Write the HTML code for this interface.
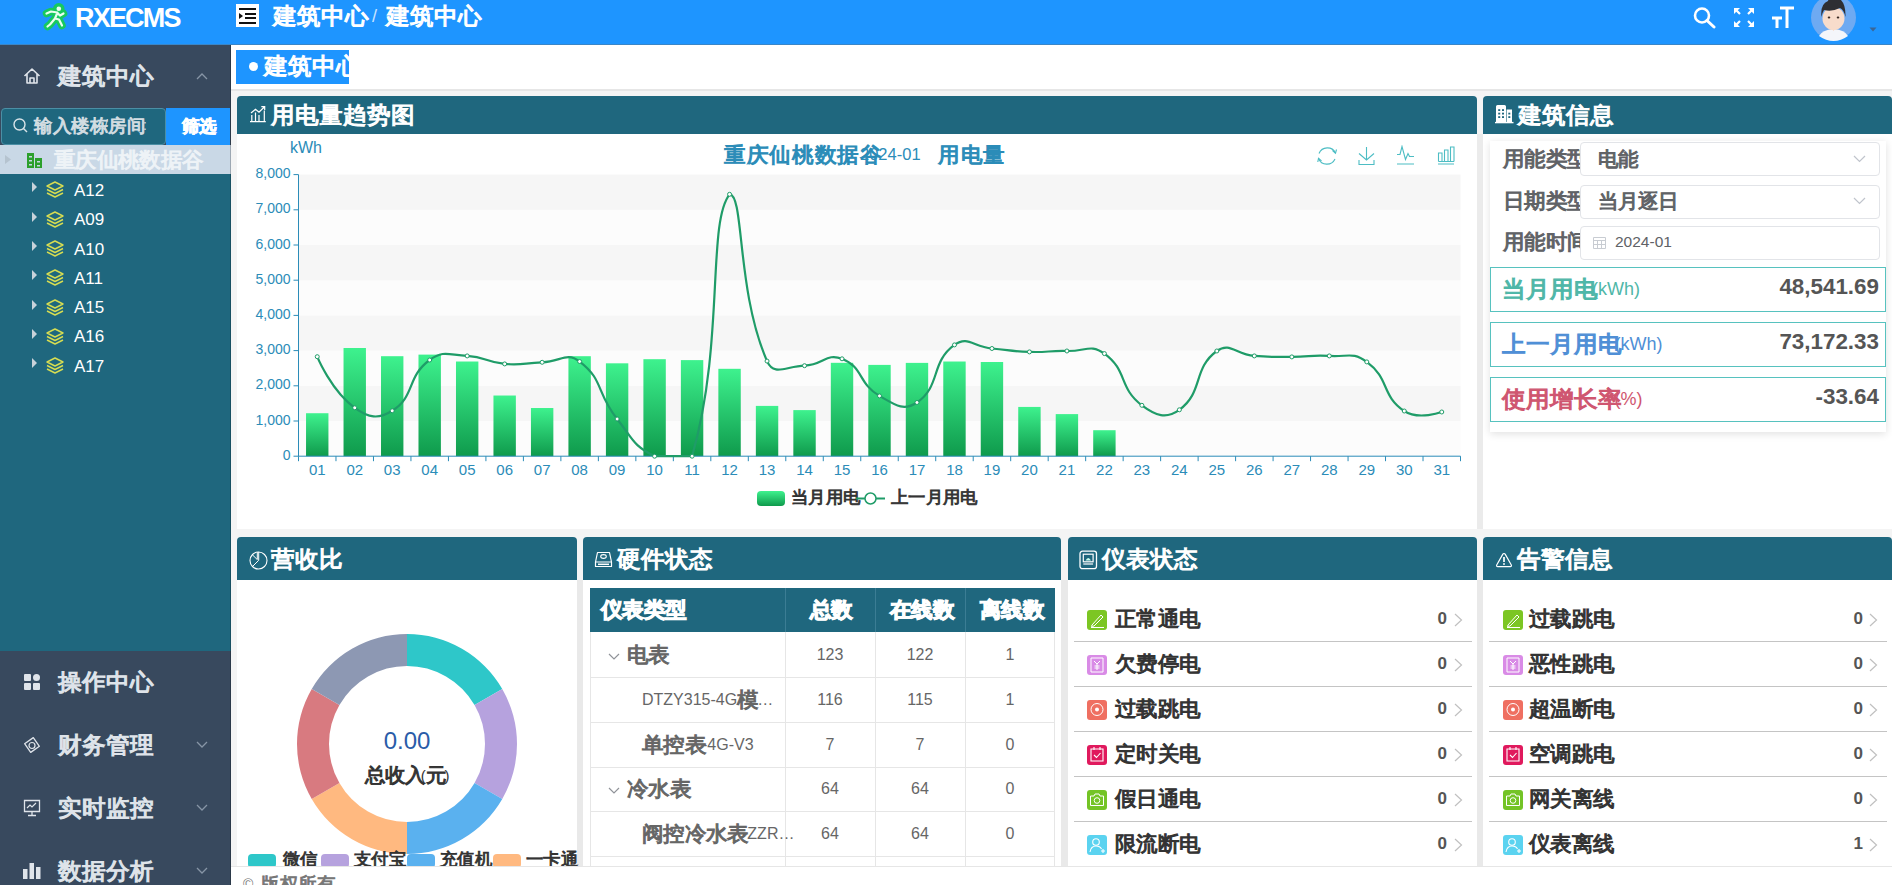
<!DOCTYPE html>
<html><head><meta charset="utf-8"><title>RXECMS</title><style>
*{margin:0;padding:0;box-sizing:border-box}
html,body{width:1892px;height:885px;overflow:hidden}
body{position:relative;background:#f4f4f4;font-family:"Liberation Sans",sans-serif;color:#333}
.a{position:absolute}
.z{display:inline-block;transform:scale(1.333,1.3);transform-origin:0 50%;-webkit-text-stroke:.05em}
.t{position:absolute;white-space:nowrap}
#hdr{left:0;top:0;width:1892px;height:45px;background:#1e95ff;border-bottom:1px solid #3a86c8}
#side{left:0;top:45px;width:231px;height:840px;background:#38495e}
#tree{left:0;top:174px;width:231px;height:477px;background:#1f677e}
.mi{color:#dfe4ea;font-size:18px;height:30px;line-height:30px}
.tr{color:#fff;font-size:17px;height:24px;line-height:24px}
.ph{background:#1f677e;border-radius:4px 4px 0 0;color:#fff;font-size:18px}
.ph .t{line-height:26px;height:26px}
.pb{background:#fff}
.sel{position:absolute;left:1580px;width:300px;height:34px;border:1px solid #e2e4e8;border-radius:4px;background:#fff}
.lab{font-size:15px;color:#606266;height:20px;line-height:20px}
.box{position:absolute;left:1490px;width:396px;height:45px;border:1px solid #57c2bf;background:#fff}
.box .l{position:absolute;left:11px;top:9.5px;font-size:18px;line-height:22px;height:22px;white-space:nowrap}
.box .v{position:absolute;right:6px;top:5.5px;font-size:22.4px;line-height:26px;font-weight:bold;color:#555}
.tbl{border-collapse:collapse}
.row{position:absolute;height:45px;border-bottom:1px solid #c8c8c8}
.row .ic{position:absolute;top:13px;width:20px;height:19px;border-radius:3px}
.row .n{position:absolute;top:12px;font-size:16px;line-height:20px;color:#333;white-space:nowrap}
.row .c{position:absolute;top:12px;font-size:17px;line-height:20px;font-weight:bold;color:#555}
.row .ch{position:absolute;top:15px;width:8px;height:14px}
.tc{position:absolute;font-size:16px;color:#666;line-height:20px;white-space:nowrap}
.lg{position:absolute;font-size:13px;color:#333;line-height:16px;white-space:nowrap}

</style></head><body>
<!-- HEADER -->
<div id="hdr" class="a">
  <svg class="a" style="left:38px;top:0" width="34" height="34" viewBox="0 0 34 34">
    <g fill="none" stroke-linecap="round" stroke-linejoin="round">
      <g stroke="#17c95e" stroke-width="7.5"><path d="M8.5 13.5 L13 11.5 L19.5 12.5 L17 18.5 L12 24.5 L9.5 26.5 M19.5 13 L22 15.5 L25.5 13.5 M17 18.5 L21 19.5 L24 25.5"/><circle cx="20.8" cy="8.8" r="2"/></g>
      <g stroke="#e9fff0" stroke-width="2.2"><path d="M8.5 13.5 L13 11.5 L19.5 12.5 L17 18.5 L12 24.5 L9.5 26.5 M19.5 13 L22 15.5 L25.5 13.5 M17 18.5 L21 19.5 L24 25.5"/></g>
      <circle cx="20.8" cy="8.8" r="2.3" fill="#e9fff0"/>
    </g>
  </svg>
  <div class="t" style="left:75px;top:5px;font-size:27px;line-height:26px;font-weight:bold;color:#fff;letter-spacing:-1.8px">RXECMS</div>
  <svg class="a" style="left:236px;top:4px" width="23" height="23" viewBox="0 0 23 23">
    <rect width="23" height="23" fill="#fff"/>
    <path d="M3 5H20M9 10H20M9 14H20M3 19H20" stroke="#111" stroke-width="2"/>
    <path d="M3 9 L7 12 L3 15Z" fill="#111"/>
  </svg>
  <div class="t" style="left:273px;top:5px;font-size:18px;line-height:22px;color:#fff"><span class="z" style="margin-right:1em">建筑中心</span> <span style="opacity:.75;margin:0 4px">/</span> <span class="z" style="margin-right:1em">建筑中心</span></div>
  <svg class="a" style="left:1692px;top:6px" width="25" height="23" viewBox="0 0 25 23">
    <circle cx="10" cy="9.5" r="7" fill="none" stroke="#fff" stroke-width="2.6"/>
    <path d="M15 14.5 L22 21" stroke="#fff" stroke-width="3" stroke-linecap="round"/>
  </svg>
  <svg class="a" style="left:1732px;top:6px" width="24" height="23" viewBox="0 0 24 23">
    <g stroke="#fff" stroke-width="2.2" fill="none">
      <path d="M3 3 L8 8M21 3 L16 8M3 20 L8 15M21 20 L16 15"/>
    </g>
    <g fill="#fff">
      <path d="M2 2 H8 L2 8Z"/><path d="M22 2 H16 L22 8Z"/><path d="M2 21 H8 L2 15Z"/><path d="M22 21 H16 L22 15Z"/>
    </g>
  </svg>
  <svg class="a" style="left:1771px;top:5px" width="24" height="24" viewBox="0 0 24 24">
    <path d="M9 3 H23 M16 3 V23" stroke="#fff" stroke-width="3"/>
    <path d="M1 13 H11 M6 13 V23" stroke="#fff" stroke-width="3"/>
  </svg>
  <svg class="a" style="left:1810px;top:-5px" width="47" height="47" viewBox="0 0 47 47">
    <circle cx="23.5" cy="22.5" r="22.5" fill="#6eaaf2"/>
    <path d="M9 41 Q12 35 23.5 34 Q35 35 38 41 Q31 46 23.5 46 Q16 46 9 41Z" fill="#f4f6fa"/>
    <path d="M19 30 L23.5 36 L28 30Z" fill="#f6d5c4"/>
    <ellipse cx="23.5" cy="23.5" rx="11" ry="11.5" fill="#f8dccb"/>
    <path d="M11.5 22 Q10 9 18 6 Q20 -1 26 2 Q36 5 35.5 22 Q34 15 30 13 Q22 17 14 15 Q12 18 11.5 22Z" fill="#2e2e33"/>
    <ellipse cx="19" cy="22.5" rx="1.3" ry="1.1" fill="#3a2a22"/><ellipse cx="28" cy="22.5" rx="1.3" ry="1.1" fill="#3a2a22"/>
  </svg>
  <svg class="a" style="left:1869px;top:27px" width="8" height="5" viewBox="0 0 8 5"><path d="M0.5 0.5 H7.5 L4 4.5Z" fill="#3a6696"/></svg>
</div>

<!-- SIDEBAR -->
<div id="side" class="a"></div>
<svg class="a" style="left:23px;top:67px" width="18" height="18" viewBox="0 0 18 18">
  <path d="M1.5 9 L9 2 L16.5 9 M4 7 V16 H14 V7 M7 16 V11 H11 V16" fill="none" stroke="#dfe4ea" stroke-width="1.6" stroke-linejoin="round"/>
</svg>
<div class="t mi" style="left:58px;top:61px"><span class="z" style="margin-right:1em">建筑中心</span></div>
<svg class="a" style="left:196px;top:72px" width="12" height="8" viewBox="0 0 12 8"><path d="M1 7 L6 2 L11 7" fill="none" stroke="#8795a6" stroke-width="1.3"/></svg>

<!-- search -->
<div class="a" style="left:1px;top:108px;width:165px;height:37px;background:#1f677e;border:1px solid #4b8fa5;border-radius:4px"></div>
<svg class="a" style="left:12px;top:117px" width="17" height="17" viewBox="0 0 17 17"><circle cx="7.5" cy="7.5" r="5.5" fill="none" stroke="#d8e3e8" stroke-width="1.4"/><path d="M11.5 11.5 L15 15" stroke="#d8e3e8" stroke-width="1.4"/></svg>
<div class="t" style="left:34px;top:116px;font-size:14px;line-height:18px;color:#d3dde2"><span class="z" style="margin-right:1em">输入楼栋</span>/<span class="z" style="margin-right:0.5em">房间</span>:</div>
<div class="a" style="left:166px;top:108px;width:64px;height:37px;background:#1e95ff"></div>
<div class="t" style="left:166px;top:117.5px;width:64px;text-align:center;font-size:13px;line-height:18px;color:#fff;font-weight:bold"><span class="z" style="margin-right:0.5em">筛选</span></div>

<!-- tree -->
<div class="a" style="left:0;top:145px;width:231px;height:29px;background:#c9d8e6"></div>
<svg class="a" style="left:5px;top:155px" width="6" height="9" viewBox="0 0 6 9"><path d="M0 0 L6 4.5 L0 9Z" fill="#b5c3cf"/></svg>
<svg class="a" style="left:26px;top:152px" width="17" height="16" viewBox="0 0 17 16">
  <rect x="1" y="1" width="7" height="15" fill="#2ca02c"/><rect x="9" y="6" width="7" height="10" fill="#2ca02c"/>
  <g fill="#c9d8e6"><rect x="3" y="4" width="3" height="1.5"/><rect x="3" y="8" width="3" height="1.5"/><rect x="3" y="12" width="3" height="1.5"/><rect x="11" y="9" width="3" height="1.5"/><rect x="11" y="13" width="3" height="1.5"/></g>
</svg>
<div class="t" style="left:54px;top:150px;font-size:16px;line-height:20px;color:#eef3f7"><span class="z" style="margin-right:1.75em">重庆仙桃数据谷</span></div>
<div id="tree" class="a"></div>
<div class="a" style="left:230px;top:45px;width:1px;height:840px;background:rgba(0,0,0,.22)"></div>
<div class="a" id="treeitems"></div>
<svg class="a" style="left:32px;top:182.0px" width="6" height="10" viewBox="0 0 6 10"><path d="M0 0 L5 5 L0 10Z" fill="#c8d2da"/></svg>
<svg class="a" style="left:46px;top:181.0px" width="18" height="17" viewBox="0 0 18 17"><g fill="none" stroke="#d6dc52" stroke-width="1.4" stroke-linejoin="round"><path d="M9 1 L17 5 L9 9 L1 5Z"/><path d="M1 8.5 L9 12.5 L17 8.5"/><path d="M1 12 L9 16 L17 12"/></g></svg>
<div class="t tr" style="left:74px;top:178.5px">A12</div>
<svg class="a" style="left:32px;top:211.5px" width="6" height="10" viewBox="0 0 6 10"><path d="M0 0 L5 5 L0 10Z" fill="#c8d2da"/></svg>
<svg class="a" style="left:46px;top:210.5px" width="18" height="17" viewBox="0 0 18 17"><g fill="none" stroke="#d6dc52" stroke-width="1.4" stroke-linejoin="round"><path d="M9 1 L17 5 L9 9 L1 5Z"/><path d="M1 8.5 L9 12.5 L17 8.5"/><path d="M1 12 L9 16 L17 12"/></g></svg>
<div class="t tr" style="left:74px;top:208.0px">A09</div>
<svg class="a" style="left:32px;top:241.0px" width="6" height="10" viewBox="0 0 6 10"><path d="M0 0 L5 5 L0 10Z" fill="#c8d2da"/></svg>
<svg class="a" style="left:46px;top:240.0px" width="18" height="17" viewBox="0 0 18 17"><g fill="none" stroke="#d6dc52" stroke-width="1.4" stroke-linejoin="round"><path d="M9 1 L17 5 L9 9 L1 5Z"/><path d="M1 8.5 L9 12.5 L17 8.5"/><path d="M1 12 L9 16 L17 12"/></g></svg>
<div class="t tr" style="left:74px;top:237.5px">A10</div>
<svg class="a" style="left:32px;top:270.0px" width="6" height="10" viewBox="0 0 6 10"><path d="M0 0 L5 5 L0 10Z" fill="#c8d2da"/></svg>
<svg class="a" style="left:46px;top:269.0px" width="18" height="17" viewBox="0 0 18 17"><g fill="none" stroke="#d6dc52" stroke-width="1.4" stroke-linejoin="round"><path d="M9 1 L17 5 L9 9 L1 5Z"/><path d="M1 8.5 L9 12.5 L17 8.5"/><path d="M1 12 L9 16 L17 12"/></g></svg>
<div class="t tr" style="left:74px;top:266.5px">A11</div>
<svg class="a" style="left:32px;top:299.5px" width="6" height="10" viewBox="0 0 6 10"><path d="M0 0 L5 5 L0 10Z" fill="#c8d2da"/></svg>
<svg class="a" style="left:46px;top:298.5px" width="18" height="17" viewBox="0 0 18 17"><g fill="none" stroke="#d6dc52" stroke-width="1.4" stroke-linejoin="round"><path d="M9 1 L17 5 L9 9 L1 5Z"/><path d="M1 8.5 L9 12.5 L17 8.5"/><path d="M1 12 L9 16 L17 12"/></g></svg>
<div class="t tr" style="left:74px;top:296.0px">A15</div>
<svg class="a" style="left:32px;top:328.5px" width="6" height="10" viewBox="0 0 6 10"><path d="M0 0 L5 5 L0 10Z" fill="#c8d2da"/></svg>
<svg class="a" style="left:46px;top:327.5px" width="18" height="17" viewBox="0 0 18 17"><g fill="none" stroke="#d6dc52" stroke-width="1.4" stroke-linejoin="round"><path d="M9 1 L17 5 L9 9 L1 5Z"/><path d="M1 8.5 L9 12.5 L17 8.5"/><path d="M1 12 L9 16 L17 12"/></g></svg>
<div class="t tr" style="left:74px;top:325.0px">A16</div>
<svg class="a" style="left:32px;top:358.0px" width="6" height="10" viewBox="0 0 6 10"><path d="M0 0 L5 5 L0 10Z" fill="#c8d2da"/></svg>
<svg class="a" style="left:46px;top:357.0px" width="18" height="17" viewBox="0 0 18 17"><g fill="none" stroke="#d6dc52" stroke-width="1.4" stroke-linejoin="round"><path d="M9 1 L17 5 L9 9 L1 5Z"/><path d="M1 8.5 L9 12.5 L17 8.5"/><path d="M1 12 L9 16 L17 12"/></g></svg>
<div class="t tr" style="left:74px;top:354.5px">A17</div>

<!-- bottom menu icons -->
<svg class="a" style="left:24px;top:674px" width="16" height="16" viewBox="0 0 16 16"><g fill="#dfe4ea"><rect x="0" y="0" width="7" height="7" rx="1"/><rect x="9" y="0" width="7" height="7" rx="3.5"/><rect x="0" y="9" width="7" height="7" rx="1"/><rect x="9" y="9" width="7" height="7" rx="1"/></g></svg>
<div class="t mi" style="left:58px;top:667px"><span class="z" style="margin-right:1em">操作中心</span></div>
<svg class="a" style="left:23px;top:736px" width="18" height="18" viewBox="0 0 18 18"><path d="M9 1.5 L16.5 9 L9 16.5 L1.5 9Z" fill="none" stroke="#dfe4ea" stroke-width="1.3" stroke-linejoin="round" transform="rotate(10 9 9)"/><circle cx="9" cy="9.5" r="3" fill="none" stroke="#dfe4ea" stroke-width="1.2"/></svg>
<div class="t mi" style="left:58px;top:730px"><span class="z" style="margin-right:1em">财务管理</span></div>
<svg class="a" style="left:196px;top:741px" width="12" height="8" viewBox="0 0 12 8"><path d="M1 1 L6 6 L11 1" fill="none" stroke="#8795a6" stroke-width="1.3"/></svg>
<svg class="a" style="left:23px;top:799px" width="18" height="18" viewBox="0 0 18 18"><path d="M1.5 1.5 H16.5 V12.5 H1.5Z M9 12.5 V16.5 M5 16.5 H13" fill="none" stroke="#dfe4ea" stroke-width="1.3"/><path d="M4 9 L7 6 L9 8 L13 4" fill="none" stroke="#dfe4ea" stroke-width="1.2"/></svg>
<div class="t mi" style="left:58px;top:793px"><span class="z" style="margin-right:1em">实时监控</span></div>
<svg class="a" style="left:196px;top:804px" width="12" height="8" viewBox="0 0 12 8"><path d="M1 1 L6 6 L11 1" fill="none" stroke="#8795a6" stroke-width="1.3"/></svg>
<svg class="a" style="left:23px;top:861px" width="18" height="18" viewBox="0 0 18 18"><g fill="#dfe4ea"><rect x="0" y="8" width="4.5" height="10"/><rect x="6.5" y="2" width="4.5" height="16"/><rect x="13" y="6" width="4.5" height="12"/></g></svg>
<div class="t mi" style="left:58px;top:856px"><span class="z" style="margin-right:1em">数据分析</span></div>
<svg class="a" style="left:196px;top:867px" width="12" height="8" viewBox="0 0 12 8"><path d="M1 1 L6 6 L11 1" fill="none" stroke="#8795a6" stroke-width="1.3"/></svg>

<!-- CONTENT -->
<div class="a" style="left:231px;top:45px;width:1661px;height:44px;background:#fff"></div>
<div class="a" style="left:231px;top:89px;width:1661px;height:2px;background:#e6e6e6"></div>
<div class="a" style="left:1477px;top:134px;width:6px;height:395px;background:#ebebeb"></div>
<div class="a" style="left:577px;top:580px;width:6px;height:286px;background:#e9e9e9"></div>
<div class="a" style="left:1061px;top:580px;width:7px;height:286px;background:#e9e9e9"></div>
<div class="a" style="left:1477px;top:580px;width:6px;height:286px;background:#e9e9e9"></div>
<div class="a" style="left:237px;top:528px;width:1655px;height:1px;background:#ebebeb"></div>
<div class="a" style="left:236px;top:50px;width:113px;height:34px;background:#1e95ff"></div>
<div class="a" style="left:249px;top:62px;width:9px;height:9px;border-radius:50%;background:#fff"></div>
<div class="t" style="left:264px;top:55px;font-size:18px;line-height:22px;color:#fff"><span class="z" style="margin-right:1em">建筑中心</span></div>

<!-- Panel 1 -->
<div class="a pb" style="left:237px;top:134px;width:1240px;height:395px"></div>
<div class="a ph" style="left:237px;top:96px;width:1240px;height:38px">
  <svg class="a" style="left:12px;top:9px" width="18" height="18" viewBox="0 0 18 18"><path d="M2 8 L6.5 4.2 L10 7.2 L15.5 1.8 M12.3 1.6 H15.7 V5 M2.8 16.5 V10 M6.5 16.5 V7.5 M10 16.5 V10 M15.3 16.5 V5.5 M1 16.6 H16.8" fill="none" stroke="#fff" stroke-width="1.2"/></svg>
  <div class="t" style="left:34px;top:6px"><span class="z" style="margin-right:1.5em">用电量趋势图</span></div>
</div>
<div class="t" style="left:290px;top:139px;font-size:16px;line-height:18px;color:#2b8cb8">kWh</div>
<div class="t" style="left:724px;top:144px;font-size:16.5px;line-height:20px;color:#2b8cb8"><span class="z" style="margin-right:1.75em">重庆仙桃数据谷</span></div>
<div class="t" style="left:860px;top:144px;font-size:16.5px;line-height:20px;color:#2b8cb8">2024-01</div>
<div class="t" style="left:938px;top:144px;font-size:16.5px;line-height:20px;color:#2b8cb8"><span class="z" style="margin-right:0.75em">用电量</span></div>
<svg class="a" style="left:1316px;top:145px" width="140" height="22" viewBox="0 0 140 22">
  <g fill="none" stroke="#4dbdc4" stroke-width="1.1">
    <path d="M19.5 8 A9 9 0 0 0 3 8.5 M2.5 13.5 A9 9 0 0 0 19 14"/><path d="M16.5 5.5 L19.5 8.2 L20.5 4.5 M5.5 16 L2.5 13.3 L1.8 17"/>
    <path d="M50.5 2 V15 M43 8.5 L50.5 15 L58 8.5 M43 15 V19.5 H58 V15"/>
    <path d="M81 9.5 H84 L86 1.5 L89.5 14.5 L92 8.5 L93.5 11.5 H98 M81 19 H98"/>
    <path d="M122 19 H138 M122.5 16.5 V8 H126 V16.5 M128.5 16.5 V5 H132 V16.5 M134.5 16.5 V2 H138 V16.5 M122.5 16.5 H138"/>
  </g>
</svg>
<svg class="a" style="left:0;top:0" width="1892" height="885" viewBox="0 0 1892 885">
  <defs><linearGradient id="bg" x1="0" y1="0" x2="0" y2="1"><stop offset="0" stop-color="#3ef28e"/><stop offset="1" stop-color="#0f9a4c"/></linearGradient></defs>
  <style>.yl{font:14px "Liberation Sans",sans-serif;fill:#2b8cb8}.xl{font:15px "Liberation Sans",sans-serif;fill:#2b8cb8}</style>
<rect x="298.5" y="421.00" width="1162.0" height="35.20" fill="#fcfcfc"/>
<rect x="298.5" y="385.80" width="1162.0" height="35.20" fill="#f6f6f6"/>
<rect x="298.5" y="350.60" width="1162.0" height="35.20" fill="#fcfcfc"/>
<rect x="298.5" y="315.40" width="1162.0" height="35.20" fill="#f6f6f6"/>
<rect x="298.5" y="280.20" width="1162.0" height="35.20" fill="#fcfcfc"/>
<rect x="298.5" y="245.00" width="1162.0" height="35.20" fill="#f6f6f6"/>
<rect x="298.5" y="209.80" width="1162.0" height="35.20" fill="#fcfcfc"/>
<rect x="298.5" y="174.60" width="1162.0" height="35.20" fill="#f6f6f6"/>
<rect x="306.04" y="413.22" width="22.40" height="42.98" fill="url(#bg)"/>
<rect x="343.53" y="348.00" width="22.40" height="108.20" fill="url(#bg)"/>
<rect x="381.01" y="356.20" width="22.40" height="100.00" fill="url(#bg)"/>
<rect x="418.49" y="354.61" width="22.40" height="101.59" fill="url(#bg)"/>
<rect x="455.98" y="361.51" width="22.40" height="94.69" fill="url(#bg)"/>
<rect x="493.46" y="395.52" width="22.40" height="60.68" fill="url(#bg)"/>
<rect x="530.95" y="408.01" width="22.40" height="48.19" fill="url(#bg)"/>
<rect x="568.43" y="356.20" width="22.40" height="100.00" fill="url(#bg)"/>
<rect x="605.91" y="363.31" width="22.40" height="92.89" fill="url(#bg)"/>
<rect x="643.40" y="359.19" width="22.40" height="97.01" fill="url(#bg)"/>
<rect x="680.88" y="360.10" width="22.40" height="96.10" fill="url(#bg)"/>
<rect x="718.36" y="368.80" width="22.40" height="87.40" fill="url(#bg)"/>
<rect x="755.85" y="405.90" width="22.40" height="50.30" fill="url(#bg)"/>
<rect x="793.33" y="410.09" width="22.40" height="46.11" fill="url(#bg)"/>
<rect x="830.82" y="362.81" width="22.40" height="93.39" fill="url(#bg)"/>
<rect x="868.30" y="364.89" width="22.40" height="91.31" fill="url(#bg)"/>
<rect x="905.78" y="362.88" width="22.40" height="93.32" fill="url(#bg)"/>
<rect x="943.27" y="361.51" width="22.40" height="94.69" fill="url(#bg)"/>
<rect x="980.75" y="362.00" width="22.40" height="94.20" fill="url(#bg)"/>
<rect x="1018.24" y="406.92" width="22.40" height="49.28" fill="url(#bg)"/>
<rect x="1055.72" y="414.10" width="22.40" height="42.10" fill="url(#bg)"/>
<rect x="1093.20" y="430.19" width="22.40" height="26.01" fill="url(#bg)"/>
<path d="M298.5 174.6 V456.2 H1460.5" fill="none" stroke="#2b8cb8" stroke-width="1"/>
<path d="M298.5 456.20 h-5" stroke="#2b8cb8" stroke-width="1"/>
<path d="M298.5 421.00 h-5" stroke="#2b8cb8" stroke-width="1"/>
<path d="M298.5 385.80 h-5" stroke="#2b8cb8" stroke-width="1"/>
<path d="M298.5 350.60 h-5" stroke="#2b8cb8" stroke-width="1"/>
<path d="M298.5 315.40 h-5" stroke="#2b8cb8" stroke-width="1"/>
<path d="M298.5 280.20 h-5" stroke="#2b8cb8" stroke-width="1"/>
<path d="M298.5 245.00 h-5" stroke="#2b8cb8" stroke-width="1"/>
<path d="M298.5 209.80 h-5" stroke="#2b8cb8" stroke-width="1"/>
<path d="M298.5 174.60 h-5" stroke="#2b8cb8" stroke-width="1"/>
<path d="M298.50 456.2 v5" stroke="#2b8cb8" stroke-width="1"/>
<path d="M335.98 456.2 v5" stroke="#2b8cb8" stroke-width="1"/>
<path d="M373.47 456.2 v5" stroke="#2b8cb8" stroke-width="1"/>
<path d="M410.95 456.2 v5" stroke="#2b8cb8" stroke-width="1"/>
<path d="M448.44 456.2 v5" stroke="#2b8cb8" stroke-width="1"/>
<path d="M485.92 456.2 v5" stroke="#2b8cb8" stroke-width="1"/>
<path d="M523.40 456.2 v5" stroke="#2b8cb8" stroke-width="1"/>
<path d="M560.89 456.2 v5" stroke="#2b8cb8" stroke-width="1"/>
<path d="M598.37 456.2 v5" stroke="#2b8cb8" stroke-width="1"/>
<path d="M635.85 456.2 v5" stroke="#2b8cb8" stroke-width="1"/>
<path d="M673.34 456.2 v5" stroke="#2b8cb8" stroke-width="1"/>
<path d="M710.82 456.2 v5" stroke="#2b8cb8" stroke-width="1"/>
<path d="M748.31 456.2 v5" stroke="#2b8cb8" stroke-width="1"/>
<path d="M785.79 456.2 v5" stroke="#2b8cb8" stroke-width="1"/>
<path d="M823.27 456.2 v5" stroke="#2b8cb8" stroke-width="1"/>
<path d="M860.76 456.2 v5" stroke="#2b8cb8" stroke-width="1"/>
<path d="M898.24 456.2 v5" stroke="#2b8cb8" stroke-width="1"/>
<path d="M935.73 456.2 v5" stroke="#2b8cb8" stroke-width="1"/>
<path d="M973.21 456.2 v5" stroke="#2b8cb8" stroke-width="1"/>
<path d="M1010.69 456.2 v5" stroke="#2b8cb8" stroke-width="1"/>
<path d="M1048.18 456.2 v5" stroke="#2b8cb8" stroke-width="1"/>
<path d="M1085.66 456.2 v5" stroke="#2b8cb8" stroke-width="1"/>
<path d="M1123.15 456.2 v5" stroke="#2b8cb8" stroke-width="1"/>
<path d="M1160.63 456.2 v5" stroke="#2b8cb8" stroke-width="1"/>
<path d="M1198.11 456.2 v5" stroke="#2b8cb8" stroke-width="1"/>
<path d="M1235.60 456.2 v5" stroke="#2b8cb8" stroke-width="1"/>
<path d="M1273.08 456.2 v5" stroke="#2b8cb8" stroke-width="1"/>
<path d="M1310.56 456.2 v5" stroke="#2b8cb8" stroke-width="1"/>
<path d="M1348.05 456.2 v5" stroke="#2b8cb8" stroke-width="1"/>
<path d="M1385.53 456.2 v5" stroke="#2b8cb8" stroke-width="1"/>
<path d="M1423.02 456.2 v5" stroke="#2b8cb8" stroke-width="1"/>
<path d="M1460.50 456.2 v5" stroke="#2b8cb8" stroke-width="1"/>
<path d="M317.24 356.69 C317.24 356.69 331.20 390.82 354.73 407.80 C368.68 417.87 378.22 419.71 392.21 410.79 C415.70 395.81 406.23 377.18 429.69 360.00 C443.71 349.74 448.59 354.95 467.18 355.92 C486.07 356.90 485.72 362.30 504.66 363.91 C523.20 365.48 523.40 362.89 542.15 362.29 C560.88 361.69 566.39 351.49 579.63 361.51 C603.87 379.85 595.93 392.24 617.11 418.99 C633.41 439.58 632.67 445.32 654.60 456.20 C670.16 456.20 687.43 456.20 692.08 456.20 C724.91 341.51 706.79 223.20 729.56 194.31 C744.28 194.31 736.35 290.90 767.05 361.09 C773.83 376.60 785.88 366.27 804.53 365.70 C823.36 365.13 826.29 352.47 842.02 358.80 C863.78 367.57 857.73 383.22 879.50 395.90 C895.21 405.06 903.62 411.58 916.98 402.48 C941.11 386.07 930.25 362.34 954.47 344.90 C967.74 335.34 973.21 346.74 991.95 348.49 C1010.69 350.24 1010.66 351.28 1029.44 351.90 C1048.14 352.53 1048.20 350.57 1066.92 350.99 C1085.68 351.41 1090.52 343.53 1104.40 353.59 C1128.00 370.69 1118.33 387.64 1141.89 405.30 C1155.81 415.74 1166.21 419.34 1179.37 409.81 C1203.69 392.19 1192.55 368.46 1216.85 350.99 C1230.03 341.52 1235.52 354.43 1254.34 355.92 C1273.00 357.39 1273.08 356.90 1291.82 356.90 C1310.56 356.90 1310.68 354.67 1329.31 355.92 C1348.16 357.17 1352.52 351.42 1366.79 361.90 C1390.01 378.96 1380.95 395.42 1404.27 411.00 C1418.43 420.46 1441.76 411.99 1441.76 411.99" fill="none" stroke="#1f9c68" stroke-width="2.2"/>
<circle cx="317.24" cy="356.69" r="2" fill="#fff" stroke="#1f9c68" stroke-width="1"/>
<circle cx="354.73" cy="407.80" r="2" fill="#fff" stroke="#1f9c68" stroke-width="1"/>
<circle cx="392.21" cy="410.79" r="2" fill="#fff" stroke="#1f9c68" stroke-width="1"/>
<circle cx="429.69" cy="360.00" r="2" fill="#fff" stroke="#1f9c68" stroke-width="1"/>
<circle cx="467.18" cy="355.92" r="2" fill="#fff" stroke="#1f9c68" stroke-width="1"/>
<circle cx="504.66" cy="363.91" r="2" fill="#fff" stroke="#1f9c68" stroke-width="1"/>
<circle cx="542.15" cy="362.29" r="2" fill="#fff" stroke="#1f9c68" stroke-width="1"/>
<circle cx="579.63" cy="361.51" r="2" fill="#fff" stroke="#1f9c68" stroke-width="1"/>
<circle cx="617.11" cy="418.99" r="2" fill="#fff" stroke="#1f9c68" stroke-width="1"/>
<circle cx="654.60" cy="456.20" r="2" fill="#fff" stroke="#1f9c68" stroke-width="1"/>
<circle cx="692.08" cy="456.20" r="2" fill="#fff" stroke="#1f9c68" stroke-width="1"/>
<circle cx="729.56" cy="194.31" r="2" fill="#fff" stroke="#1f9c68" stroke-width="1"/>
<circle cx="767.05" cy="361.09" r="2" fill="#fff" stroke="#1f9c68" stroke-width="1"/>
<circle cx="804.53" cy="365.70" r="2" fill="#fff" stroke="#1f9c68" stroke-width="1"/>
<circle cx="842.02" cy="358.80" r="2" fill="#fff" stroke="#1f9c68" stroke-width="1"/>
<circle cx="879.50" cy="395.90" r="2" fill="#fff" stroke="#1f9c68" stroke-width="1"/>
<circle cx="916.98" cy="402.48" r="2" fill="#fff" stroke="#1f9c68" stroke-width="1"/>
<circle cx="954.47" cy="344.90" r="2" fill="#fff" stroke="#1f9c68" stroke-width="1"/>
<circle cx="991.95" cy="348.49" r="2" fill="#fff" stroke="#1f9c68" stroke-width="1"/>
<circle cx="1029.44" cy="351.90" r="2" fill="#fff" stroke="#1f9c68" stroke-width="1"/>
<circle cx="1066.92" cy="350.99" r="2" fill="#fff" stroke="#1f9c68" stroke-width="1"/>
<circle cx="1104.40" cy="353.59" r="2" fill="#fff" stroke="#1f9c68" stroke-width="1"/>
<circle cx="1141.89" cy="405.30" r="2" fill="#fff" stroke="#1f9c68" stroke-width="1"/>
<circle cx="1179.37" cy="409.81" r="2" fill="#fff" stroke="#1f9c68" stroke-width="1"/>
<circle cx="1216.85" cy="350.99" r="2" fill="#fff" stroke="#1f9c68" stroke-width="1"/>
<circle cx="1254.34" cy="355.92" r="2" fill="#fff" stroke="#1f9c68" stroke-width="1"/>
<circle cx="1291.82" cy="356.90" r="2" fill="#fff" stroke="#1f9c68" stroke-width="1"/>
<circle cx="1329.31" cy="355.92" r="2" fill="#fff" stroke="#1f9c68" stroke-width="1"/>
<circle cx="1366.79" cy="361.90" r="2" fill="#fff" stroke="#1f9c68" stroke-width="1"/>
<circle cx="1404.27" cy="411.00" r="2" fill="#fff" stroke="#1f9c68" stroke-width="1"/>
<circle cx="1441.76" cy="411.99" r="2" fill="#fff" stroke="#1f9c68" stroke-width="1"/>
<text x="290.5" y="459.70" text-anchor="end" class="yl">0</text>
<text x="290.5" y="424.50" text-anchor="end" class="yl">1,000</text>
<text x="290.5" y="389.30" text-anchor="end" class="yl">2,000</text>
<text x="290.5" y="354.10" text-anchor="end" class="yl">3,000</text>
<text x="290.5" y="318.90" text-anchor="end" class="yl">4,000</text>
<text x="290.5" y="283.70" text-anchor="end" class="yl">5,000</text>
<text x="290.5" y="248.50" text-anchor="end" class="yl">6,000</text>
<text x="290.5" y="213.30" text-anchor="end" class="yl">7,000</text>
<text x="290.5" y="178.10" text-anchor="end" class="yl">8,000</text>
<text x="317.24" y="475" text-anchor="middle" class="xl">01</text>
<text x="354.73" y="475" text-anchor="middle" class="xl">02</text>
<text x="392.21" y="475" text-anchor="middle" class="xl">03</text>
<text x="429.69" y="475" text-anchor="middle" class="xl">04</text>
<text x="467.18" y="475" text-anchor="middle" class="xl">05</text>
<text x="504.66" y="475" text-anchor="middle" class="xl">06</text>
<text x="542.15" y="475" text-anchor="middle" class="xl">07</text>
<text x="579.63" y="475" text-anchor="middle" class="xl">08</text>
<text x="617.11" y="475" text-anchor="middle" class="xl">09</text>
<text x="654.60" y="475" text-anchor="middle" class="xl">10</text>
<text x="692.08" y="475" text-anchor="middle" class="xl">11</text>
<text x="729.56" y="475" text-anchor="middle" class="xl">12</text>
<text x="767.05" y="475" text-anchor="middle" class="xl">13</text>
<text x="804.53" y="475" text-anchor="middle" class="xl">14</text>
<text x="842.02" y="475" text-anchor="middle" class="xl">15</text>
<text x="879.50" y="475" text-anchor="middle" class="xl">16</text>
<text x="916.98" y="475" text-anchor="middle" class="xl">17</text>
<text x="954.47" y="475" text-anchor="middle" class="xl">18</text>
<text x="991.95" y="475" text-anchor="middle" class="xl">19</text>
<text x="1029.44" y="475" text-anchor="middle" class="xl">20</text>
<text x="1066.92" y="475" text-anchor="middle" class="xl">21</text>
<text x="1104.40" y="475" text-anchor="middle" class="xl">22</text>
<text x="1141.89" y="475" text-anchor="middle" class="xl">23</text>
<text x="1179.37" y="475" text-anchor="middle" class="xl">24</text>
<text x="1216.85" y="475" text-anchor="middle" class="xl">25</text>
<text x="1254.34" y="475" text-anchor="middle" class="xl">26</text>
<text x="1291.82" y="475" text-anchor="middle" class="xl">27</text>
<text x="1329.31" y="475" text-anchor="middle" class="xl">28</text>
<text x="1366.79" y="475" text-anchor="middle" class="xl">29</text>
<text x="1404.27" y="475" text-anchor="middle" class="xl">30</text>
<text x="1441.76" y="475" text-anchor="middle" class="xl">31</text>
</svg>
<div class="a" style="left:757px;top:491px;width:28px;height:15px;border-radius:4px;background:linear-gradient(#3ef28e,#0f9a4c)"></div>
<div class="lg" style="left:791px;top:490px"><span class="z" style="margin-right:1em">当月用电</span></div>
<svg class="a" style="left:856px;top:491px" width="29" height="15" viewBox="0 0 29 15"><path d="M0 7.5 H29" stroke="#1f9c68" stroke-width="2"/><circle cx="14.5" cy="7.5" r="5.5" fill="#fff" stroke="#1f9c68" stroke-width="1.5"/></svg>
<div class="lg" style="left:891px;top:490px"><span class="z" style="margin-right:1.25em">上一月用电</span></div>

<!-- Panel 2 -->
<div class="a pb" style="left:1483px;top:134px;width:409px;height:395px"></div>
<div class="a ph" style="left:1483px;top:96px;width:409px;height:38px">
  <svg class="a" style="left:12px;top:8px" width="19" height="20" viewBox="0 0 19 20"><path d="M1 18.5 V2.5 Q1 1 2.5 1 H9.5 Q11 1 11 2.5 V18.5Z M11.6 18.5 V5.5 H17 V18.5Z" fill="#fff"/><g fill="#1f677e"><rect x="3.2" y="5.2" width="2" height="1.8"/><rect x="7" y="5.2" width="2" height="1.8"/><rect x="3.2" y="8.7" width="2" height="1.8"/><rect x="7" y="8.7" width="2" height="1.8"/><rect x="3.2" y="12.2" width="2" height="1.8"/><rect x="7" y="12.2" width="2" height="1.8"/><rect x="13.3" y="8.7" width="2" height="1.8"/><rect x="13.3" y="12.2" width="2" height="1.8"/></g><path d="M0 18.6 H18.5" stroke="#fff" stroke-width="1.4"/></svg>
  <div class="t" style="left:35px;top:6px"><span class="z" style="margin-right:1em">建筑信息</span></div>
</div>
<div class="a" style="left:1490px;top:141px;width:396px;height:291px;background:#fff;box-shadow:0 2px 8px rgba(0,0,0,.12)"></div>
<div class="t lab" style="left:1503px;top:149px;font-size:16px"><span class="z" style="margin-right:1em">用能类型</span></div>
<div class="sel" style="top:142px"></div>
<div class="t lab" style="left:1598px;top:149px"><span class="z" style="margin-right:0.5em">电能</span></div>
<svg class="a" style="left:1853px;top:155px" width="13" height="8" viewBox="0 0 13 8"><path d="M1 1 L6.5 6.5 L12 1" fill="none" stroke="#c0c4cc" stroke-width="1.2"/></svg>
<div class="t lab" style="left:1503px;top:191px;font-size:16px"><span class="z" style="margin-right:1em">日期类型</span></div>
<div class="sel" style="top:185px"></div>
<div class="t lab" style="left:1598px;top:191px"><span class="z" style="margin-right:1em">当月逐日</span></div>
<svg class="a" style="left:1853px;top:197px" width="13" height="8" viewBox="0 0 13 8"><path d="M1 1 L6.5 6.5 L12 1" fill="none" stroke="#c0c4cc" stroke-width="1.2"/></svg>
<div class="t lab" style="left:1503px;top:232px;font-size:16px"><span class="z" style="margin-right:1em">用能时间</span></div>
<div class="sel" style="top:226px"></div>
<svg class="a" style="left:1593px;top:236px" width="13" height="13" viewBox="0 0 13 13"><path d="M0.5 1.5 H12.5 V12.5 H0.5Z M0.5 4.5 H12.5 M4.5 4.5 V12.5 M8.5 4.5 V12.5 M0.5 8.5 H12.5" fill="none" stroke="#c8ccd2" stroke-width="1"/></svg>
<div class="t lab" style="left:1615px;top:232px;font-size:15.5px">2024-01</div>
<div class="box" style="top:267px"><div class="l" style="color:#4fb7a8"><span class="z" style="margin-right:1em">当月用电</span>(kWh)</div><div class="v">48,541.69</div></div>
<div class="box" style="top:322px"><div class="l" style="color:#4f8fd6"><span class="z" style="margin-right:1.25em">上一月用电</span>(kWh)</div><div class="v">73,172.33</div></div>
<div class="box" style="top:377px"><div class="l" style="color:#cf5670"><span class="z" style="margin-right:1.25em">使用增长率</span>(%)</div><div class="v">-33.64</div></div>

<!-- Bottom panels -->
<div class="a pb" style="left:237px;top:580px;width:340px;height:305px"></div>
<div class="a ph" style="left:237px;top:537px;width:340px;height:43px">
  <svg class="a" style="left:11.5px;top:13.5px" width="19" height="19" viewBox="0 0 19 19"><circle cx="9.5" cy="9.5" r="8.5" fill="none" stroke="#fff" stroke-width="1.1"/><path d="M9.7 1 V9.3 L3.6 15.4 M8.3 1.2 V8.6 L3.2 3.6" fill="none" stroke="#fff" stroke-width="1"/></svg>
  <div class="t" style="left:34px;top:9px"><span class="z" style="margin-right:0.75em">营收比</span></div>
</div>
<svg class="a" style="left:287px;top:624px" width="240" height="240" viewBox="-120 -120 240 240">
<path d="M0.00 -110.00 A110 110 0 0 1 95.26 -55.00 L67.55 -39.00 A78 78 0 0 0 0.00 -78.00 Z" fill="#2ec7c9"/>
<path d="M95.26 -55.00 A110 110 0 0 1 95.26 55.00 L67.55 39.00 A78 78 0 0 0 67.55 -39.00 Z" fill="#b6a2de"/>
<path d="M95.26 55.00 A110 110 0 0 1 0.00 110.00 L0.00 78.00 A78 78 0 0 0 67.55 39.00 Z" fill="#5ab1ef"/>
<path d="M0.00 110.00 A110 110 0 0 1 -95.26 55.00 L-67.55 39.00 A78 78 0 0 0 0.00 78.00 Z" fill="#ffb980"/>
<path d="M-95.26 55.00 A110 110 0 0 1 -95.26 -55.00 L-67.55 -39.00 A78 78 0 0 0 -67.55 39.00 Z" fill="#d87a80"/>
<path d="M-95.26 -55.00 A110 110 0 0 1 -0.00 -110.00 L-0.00 -78.00 A78 78 0 0 0 -67.55 -39.00 Z" fill="#8d98b3"/>
</svg>
<div class="t" style="left:337px;top:727px;width:140px;text-align:center;font-size:24px;line-height:28px;color:#2a5ca8">0.00</div>
<div class="t" style="left:337px;top:767px;width:140px;text-align:center;font-size:15px;line-height:18px;color:#333"><span class="z" style="margin-right:0.75em">总收入</span>(<span class="z" style="margin-right:0.25em">元</span>)</div>
<div class="a" style="left:248px;top:854px;width:28px;height:14px;border-radius:4px;background:#2ec7c9"></div>
<div class="lg" style="left:283px;top:852px"><span class="z" style="margin-right:0.5em">微信</span></div>
<div class="a" style="left:321px;top:854px;width:28px;height:14px;border-radius:4px;background:#b6a2de"></div>
<div class="lg" style="left:354px;top:852px"><span class="z" style="margin-right:0.75em">支付宝</span></div>
<div class="a" style="left:407px;top:854px;width:28px;height:14px;border-radius:4px;background:#5ab1ef"></div>
<div class="lg" style="left:440px;top:852px"><span class="z" style="margin-right:0.75em">充值机</span></div>
<div class="a" style="left:493px;top:854px;width:28px;height:14px;border-radius:4px;background:#ffb980"></div>
<div class="lg" style="left:526px;top:852px"><span class="z" style="margin-right:0.75em">一卡通</span></div>

<div class="a pb" style="left:583px;top:580px;width:478px;height:305px"></div>
<div class="a ph" style="left:583px;top:537px;width:478px;height:43px">
  <svg class="a" style="left:11px;top:14px" width="19" height="17" viewBox="0 0 19 17"><path d="M3.5 1.5 H15.5 L17.5 11 V15.5 H1.5 V11Z M1.5 11 H17.5" fill="none" stroke="#fff" stroke-width="1.2" stroke-linejoin="round"/><path d="M4 13.3 H15" stroke="#fff" stroke-width="1.5"/><ellipse cx="9.5" cy="5.5" rx="2.8" ry="1.9" fill="none" stroke="#fff" stroke-width="1.1"/></svg>
  <div class="t" style="left:34px;top:9px"><span class="z" style="margin-right:1em">硬件状态</span></div>
</div>
<div class="a" style="left:590px;top:588px;width:465px;height:44px;background:#1f677e"></div>
<div class="a" style="left:785.0px;top:588px;width:1px;height:44px;background:#3b7d94"></div>
<div class="a" style="left:875.0px;top:588px;width:1px;height:44px;background:#3b7d94"></div>
<div class="a" style="left:965.0px;top:588px;width:1px;height:44px;background:#3b7d94"></div>
<div class="t" style="left:601px;top:600px;font-size:16px;line-height:20px;color:#fff;font-weight:bold"><span class="z" style="margin-right:1em">仪表类型</span></div>
<div class="t" style="left:785.0px;top:600px;width:90.0px;text-align:center;font-size:16px;line-height:20px;color:#fff;font-weight:bold"><span class="z" style="margin-right:0.5em">总数</span></div>
<div class="t" style="left:875.0px;top:600px;width:90.0px;text-align:center;font-size:16px;line-height:20px;color:#fff;font-weight:bold"><span class="z" style="margin-right:0.75em">在线数</span></div>
<div class="t" style="left:965.0px;top:600px;width:90.0px;text-align:center;font-size:16px;line-height:20px;color:#fff;font-weight:bold"><span class="z" style="margin-right:0.75em">离线数</span></div>
<div class="a" style="left:590px;top:677px;width:465px;height:1px;background:#e6e6e6"></div>
<div class="a" style="left:590px;top:632px;width:1px;height:234px;background:#e6e6e6"></div>
<div class="a" style="left:1054px;top:632px;width:1px;height:234px;background:#e6e6e6"></div>
<div class="a" style="left:785.0px;top:632px;width:1px;height:234px;background:#e6e6e6"></div>
<div class="a" style="left:875.0px;top:632px;width:1px;height:234px;background:#e6e6e6"></div>
<div class="a" style="left:965.0px;top:632px;width:1px;height:234px;background:#e6e6e6"></div>
<svg class="a" style="left:608px;top:653.4px" width="12" height="8" viewBox="0 0 12 8"><path d="M1 1 L6 6 L11 1" fill="none" stroke="#909399" stroke-width="1.2"/></svg>
<div class="tc" style="left:627px;top:645.2px"><span class="z" style="margin-right:0.5em">电表</span></div>
<div class="tc" style="left:785.0px;top:645.2px;width:90.0px;text-align:center">123</div>
<div class="tc" style="left:875.0px;top:645.2px;width:90.0px;text-align:center">122</div>
<div class="tc" style="left:965.0px;top:645.2px;width:90.0px;text-align:center">1</div>
<div class="a" style="left:590px;top:722px;width:465px;height:1px;background:#e6e6e6"></div>
<div class="tc" style="left:642px;top:690.2px">DTZY315-4G<span class="z" style="margin-right:0.25em">模</span>…</div>
<div class="tc" style="left:785.0px;top:690.2px;width:90.0px;text-align:center">116</div>
<div class="tc" style="left:875.0px;top:690.2px;width:90.0px;text-align:center">115</div>
<div class="tc" style="left:965.0px;top:690.2px;width:90.0px;text-align:center">1</div>
<div class="a" style="left:590px;top:767px;width:465px;height:1px;background:#e6e6e6"></div>
<div class="tc" style="left:642px;top:735.2px"><span class="z" style="margin-right:0.75em">单控表</span>-4G-V3</div>
<div class="tc" style="left:785.0px;top:735.2px;width:90.0px;text-align:center">7</div>
<div class="tc" style="left:875.0px;top:735.2px;width:90.0px;text-align:center">7</div>
<div class="tc" style="left:965.0px;top:735.2px;width:90.0px;text-align:center">0</div>
<div class="a" style="left:590px;top:811px;width:465px;height:1px;background:#e6e6e6"></div>
<svg class="a" style="left:608px;top:787.4px" width="12" height="8" viewBox="0 0 12 8"><path d="M1 1 L6 6 L11 1" fill="none" stroke="#909399" stroke-width="1.2"/></svg>
<div class="tc" style="left:627px;top:779.2px"><span class="z" style="margin-right:0.75em">冷水表</span></div>
<div class="tc" style="left:785.0px;top:779.2px;width:90.0px;text-align:center">64</div>
<div class="tc" style="left:875.0px;top:779.2px;width:90.0px;text-align:center">64</div>
<div class="tc" style="left:965.0px;top:779.2px;width:90.0px;text-align:center">0</div>
<div class="a" style="left:590px;top:856px;width:465px;height:1px;background:#e6e6e6"></div>
<div class="tc" style="left:642px;top:824.2px"><span class="z" style="margin-right:1.25em">阀控冷水表</span>-ZZR…</div>
<div class="tc" style="left:785.0px;top:824.2px;width:90.0px;text-align:center">64</div>
<div class="tc" style="left:875.0px;top:824.2px;width:90.0px;text-align:center">64</div>
<div class="tc" style="left:965.0px;top:824.2px;width:90.0px;text-align:center">0</div>
<div class="a" style="left:590px;top:901px;width:465px;height:1px;background:#e6e6e6"></div>

<div class="a pb" style="left:1068px;top:580px;width:409px;height:305px"></div>
<div class="a ph" style="left:1068px;top:537px;width:409px;height:43px">
  <svg class="a" style="left:11px;top:13px" width="19" height="20" viewBox="0 0 19 20"><rect x="1" y="1.2" width="16.5" height="17.5" rx="2.5" fill="none" stroke="#fff" stroke-width="1.3"/><rect x="4.3" y="4.2" width="9.8" height="7.6" fill="none" stroke="#fff" stroke-width="1.2"/><path d="M6.5 10.5 Q9.2 5.5 12 10.5Z" fill="#cfe"/><path d="M4.3 14 H14.1" stroke="#fff" stroke-width="1.2"/></svg>
  <div class="t" style="left:34px;top:9px"><span class="z" style="margin-right:1em">仪表状态</span></div>
</div>
<div class="a" style="left:1074px;top:597px;width:398px;height:45px;border-bottom:1px solid #c4c4c4"></div>
<svg class="a" style="left:1087px;top:610px" width="20" height="20" viewBox="0 0 20 20"><rect width="20" height="20" rx="3" fill="#7cc623"/><path d="M5 15 L14 5 L16 7 L7 16 L4.5 16.5Z M4 17.5 H17" fill="none" stroke="#fff" stroke-width="1"/></svg>
<div class="t" style="left:1115px;top:609px;font-size:16px;line-height:20px;color:#333"><span class="z" style="margin-right:1em">正常通电</span></div>
<div class="t" style="left:1427px;top:609px;width:20px;text-align:right;font-size:17px;line-height:20px;font-weight:bold;color:#555">0</div>
<svg class="a" style="left:1454px;top:613px" width="9" height="14" viewBox="0 0 9 14"><path d="M1 1 L7.5 7 L1 13" fill="none" stroke="#c0c0c0" stroke-width="1.2"/></svg>
<div class="a" style="left:1074px;top:642px;width:398px;height:45px;border-bottom:1px solid #c4c4c4"></div>
<svg class="a" style="left:1087px;top:655px" width="20" height="20" viewBox="0 0 20 20"><rect width="20" height="20" rx="3" fill="#d98be6"/><path d="M4 3 H16 V17 H4Z M7 6 L10 9 L13 6 M10 9 V15 M7.5 11 H12.5 M7.5 13 H12.5" fill="none" stroke="#fff" stroke-width="1"/></svg>
<div class="t" style="left:1115px;top:654px;font-size:16px;line-height:20px;color:#333"><span class="z" style="margin-right:1em">欠费停电</span></div>
<div class="t" style="left:1427px;top:654px;width:20px;text-align:right;font-size:17px;line-height:20px;font-weight:bold;color:#555">0</div>
<svg class="a" style="left:1454px;top:658px" width="9" height="14" viewBox="0 0 9 14"><path d="M1 1 L7.5 7 L1 13" fill="none" stroke="#c0c0c0" stroke-width="1.2"/></svg>
<div class="a" style="left:1074px;top:687px;width:398px;height:45px;border-bottom:1px solid #c4c4c4"></div>
<svg class="a" style="left:1087px;top:700px" width="20" height="20" viewBox="0 0 20 20"><rect width="20" height="20" rx="3" fill="#ef6f61"/><circle cx="10" cy="9.5" r="6" fill="none" stroke="#fff" stroke-width="1"/><circle cx="10" cy="9.5" r="2" fill="#fff"/></svg>
<div class="t" style="left:1115px;top:699px;font-size:16px;line-height:20px;color:#333"><span class="z" style="margin-right:1em">过载跳电</span></div>
<div class="t" style="left:1427px;top:699px;width:20px;text-align:right;font-size:17px;line-height:20px;font-weight:bold;color:#555">0</div>
<svg class="a" style="left:1454px;top:703px" width="9" height="14" viewBox="0 0 9 14"><path d="M1 1 L7.5 7 L1 13" fill="none" stroke="#c0c0c0" stroke-width="1.2"/></svg>
<div class="a" style="left:1074px;top:732px;width:398px;height:45px;border-bottom:1px solid #c4c4c4"></div>
<svg class="a" style="left:1087px;top:745px" width="20" height="20" viewBox="0 0 20 20"><rect width="20" height="20" rx="3" fill="#e0195d"/><path d="M4 4 H16 V16 H4Z M7 2 V5 M13 2 V5 M7 10 L9.5 12.5 L13.5 8" fill="none" stroke="#fff" stroke-width="1.1"/></svg>
<div class="t" style="left:1115px;top:744px;font-size:16px;line-height:20px;color:#333"><span class="z" style="margin-right:1em">定时关电</span></div>
<div class="t" style="left:1427px;top:744px;width:20px;text-align:right;font-size:17px;line-height:20px;font-weight:bold;color:#555">0</div>
<svg class="a" style="left:1454px;top:748px" width="9" height="14" viewBox="0 0 9 14"><path d="M1 1 L7.5 7 L1 13" fill="none" stroke="#c0c0c0" stroke-width="1.2"/></svg>
<div class="a" style="left:1074px;top:777px;width:398px;height:45px;border-bottom:1px solid #c4c4c4"></div>
<svg class="a" style="left:1087px;top:790px" width="20" height="20" viewBox="0 0 20 20"><rect width="20" height="20" rx="3" fill="#74c426"/><path d="M3.5 6 H7 L8 4 H12 L13 6 H16.5 V15.5 H3.5Z" fill="none" stroke="#fff" stroke-width="1"/><circle cx="10" cy="10.5" r="2.8" fill="none" stroke="#fff" stroke-width="1"/></svg>
<div class="t" style="left:1115px;top:789px;font-size:16px;line-height:20px;color:#333"><span class="z" style="margin-right:1em">假日通电</span></div>
<div class="t" style="left:1427px;top:789px;width:20px;text-align:right;font-size:17px;line-height:20px;font-weight:bold;color:#555">0</div>
<svg class="a" style="left:1454px;top:793px" width="9" height="14" viewBox="0 0 9 14"><path d="M1 1 L7.5 7 L1 13" fill="none" stroke="#c0c0c0" stroke-width="1.2"/></svg>
<div class="a" style="left:1074px;top:822px;width:398px;height:45px;border-bottom:1px solid #c4c4c4"></div>
<svg class="a" style="left:1087px;top:835px" width="20" height="20" viewBox="0 0 20 20"><rect width="20" height="20" rx="3" fill="#5bd3f0"/><circle cx="9" cy="7" r="3.3" fill="none" stroke="#fff" stroke-width="1.1"/><path d="M3 17 Q4 11 9 11 Q13 11 14.5 14 M14 16 H18 M16 14 V18" fill="none" stroke="#fff" stroke-width="1.1"/></svg>
<div class="t" style="left:1115px;top:834px;font-size:16px;line-height:20px;color:#333"><span class="z" style="margin-right:1em">限流断电</span></div>
<div class="t" style="left:1427px;top:834px;width:20px;text-align:right;font-size:17px;line-height:20px;font-weight:bold;color:#555">0</div>
<svg class="a" style="left:1454px;top:838px" width="9" height="14" viewBox="0 0 9 14"><path d="M1 1 L7.5 7 L1 13" fill="none" stroke="#c0c0c0" stroke-width="1.2"/></svg>

<div class="a pb" style="left:1483px;top:580px;width:409px;height:305px"></div>
<div class="a ph" style="left:1483px;top:537px;width:409px;height:43px">
  <svg class="a" style="left:12px;top:15px" width="18" height="16" viewBox="0 0 18 16"><path d="M9 1.5 Q9.8 1.5 10.3 2.4 L16.3 13 Q16.8 14.6 15.3 14.6 H2.7 Q1.2 14.6 1.7 13 L7.7 2.4 Q8.2 1.5 9 1.5Z" fill="none" stroke="#fff" stroke-width="1.2" stroke-linejoin="round"/><path d="M9 5 V10" stroke="#fff" stroke-width="1.7"/><circle cx="9" cy="12" r=".95" fill="#fff"/></svg>
  <div class="t" style="left:34px;top:9px"><span class="z" style="margin-right:1em">告警信息</span></div>
</div>
<div class="a" style="left:1489px;top:597px;width:398px;height:45px;border-bottom:1px solid #c4c4c4"></div>
<svg class="a" style="left:1503px;top:610px" width="20" height="20" viewBox="0 0 20 20"><rect width="20" height="20" rx="3" fill="#7cc623"/><path d="M5 15 L14 5 L16 7 L7 16 L4.5 16.5Z M4 17.5 H17" fill="none" stroke="#fff" stroke-width="1"/></svg>
<div class="t" style="left:1529px;top:609px;font-size:16px;line-height:20px;color:#333"><span class="z" style="margin-right:1em">过载跳电</span></div>
<div class="t" style="left:1843px;top:609px;width:20px;text-align:right;font-size:17px;line-height:20px;font-weight:bold;color:#555">0</div>
<svg class="a" style="left:1869px;top:613px" width="9" height="14" viewBox="0 0 9 14"><path d="M1 1 L7.5 7 L1 13" fill="none" stroke="#c0c0c0" stroke-width="1.2"/></svg>
<div class="a" style="left:1489px;top:642px;width:398px;height:45px;border-bottom:1px solid #c4c4c4"></div>
<svg class="a" style="left:1503px;top:655px" width="20" height="20" viewBox="0 0 20 20"><rect width="20" height="20" rx="3" fill="#d98be6"/><path d="M4 3 H16 V17 H4Z M7 6 L10 9 L13 6 M10 9 V15 M7.5 11 H12.5 M7.5 13 H12.5" fill="none" stroke="#fff" stroke-width="1"/></svg>
<div class="t" style="left:1529px;top:654px;font-size:16px;line-height:20px;color:#333"><span class="z" style="margin-right:1em">恶性跳电</span></div>
<div class="t" style="left:1843px;top:654px;width:20px;text-align:right;font-size:17px;line-height:20px;font-weight:bold;color:#555">0</div>
<svg class="a" style="left:1869px;top:658px" width="9" height="14" viewBox="0 0 9 14"><path d="M1 1 L7.5 7 L1 13" fill="none" stroke="#c0c0c0" stroke-width="1.2"/></svg>
<div class="a" style="left:1489px;top:687px;width:398px;height:45px;border-bottom:1px solid #c4c4c4"></div>
<svg class="a" style="left:1503px;top:700px" width="20" height="20" viewBox="0 0 20 20"><rect width="20" height="20" rx="3" fill="#ef6f61"/><circle cx="10" cy="9.5" r="6" fill="none" stroke="#fff" stroke-width="1"/><circle cx="10" cy="9.5" r="2" fill="#fff"/></svg>
<div class="t" style="left:1529px;top:699px;font-size:16px;line-height:20px;color:#333"><span class="z" style="margin-right:1em">超温断电</span></div>
<div class="t" style="left:1843px;top:699px;width:20px;text-align:right;font-size:17px;line-height:20px;font-weight:bold;color:#555">0</div>
<svg class="a" style="left:1869px;top:703px" width="9" height="14" viewBox="0 0 9 14"><path d="M1 1 L7.5 7 L1 13" fill="none" stroke="#c0c0c0" stroke-width="1.2"/></svg>
<div class="a" style="left:1489px;top:732px;width:398px;height:45px;border-bottom:1px solid #c4c4c4"></div>
<svg class="a" style="left:1503px;top:745px" width="20" height="20" viewBox="0 0 20 20"><rect width="20" height="20" rx="3" fill="#e0195d"/><path d="M4 4 H16 V16 H4Z M7 2 V5 M13 2 V5 M7 10 L9.5 12.5 L13.5 8" fill="none" stroke="#fff" stroke-width="1.1"/></svg>
<div class="t" style="left:1529px;top:744px;font-size:16px;line-height:20px;color:#333"><span class="z" style="margin-right:1em">空调跳电</span></div>
<div class="t" style="left:1843px;top:744px;width:20px;text-align:right;font-size:17px;line-height:20px;font-weight:bold;color:#555">0</div>
<svg class="a" style="left:1869px;top:748px" width="9" height="14" viewBox="0 0 9 14"><path d="M1 1 L7.5 7 L1 13" fill="none" stroke="#c0c0c0" stroke-width="1.2"/></svg>
<div class="a" style="left:1489px;top:777px;width:398px;height:45px;border-bottom:1px solid #c4c4c4"></div>
<svg class="a" style="left:1503px;top:790px" width="20" height="20" viewBox="0 0 20 20"><rect width="20" height="20" rx="3" fill="#74c426"/><path d="M3.5 6 H7 L8 4 H12 L13 6 H16.5 V15.5 H3.5Z" fill="none" stroke="#fff" stroke-width="1"/><circle cx="10" cy="10.5" r="2.8" fill="none" stroke="#fff" stroke-width="1"/></svg>
<div class="t" style="left:1529px;top:789px;font-size:16px;line-height:20px;color:#333"><span class="z" style="margin-right:1em">网关离线</span></div>
<div class="t" style="left:1843px;top:789px;width:20px;text-align:right;font-size:17px;line-height:20px;font-weight:bold;color:#555">0</div>
<svg class="a" style="left:1869px;top:793px" width="9" height="14" viewBox="0 0 9 14"><path d="M1 1 L7.5 7 L1 13" fill="none" stroke="#c0c0c0" stroke-width="1.2"/></svg>
<div class="a" style="left:1489px;top:822px;width:398px;height:45px;border-bottom:1px solid #c4c4c4"></div>
<svg class="a" style="left:1503px;top:835px" width="20" height="20" viewBox="0 0 20 20"><rect width="20" height="20" rx="3" fill="#5bd3f0"/><circle cx="9" cy="7" r="3.3" fill="none" stroke="#fff" stroke-width="1.1"/><path d="M3 17 Q4 11 9 11 Q13 11 14.5 14 M14 16 H18 M16 14 V18" fill="none" stroke="#fff" stroke-width="1.1"/></svg>
<div class="t" style="left:1529px;top:834px;font-size:16px;line-height:20px;color:#333"><span class="z" style="margin-right:1em">仪表离线</span></div>
<div class="t" style="left:1843px;top:834px;width:20px;text-align:right;font-size:17px;line-height:20px;font-weight:bold;color:#555">1</div>
<svg class="a" style="left:1869px;top:838px" width="9" height="14" viewBox="0 0 9 14"><path d="M1 1 L7.5 7 L1 13" fill="none" stroke="#c0c0c0" stroke-width="1.2"/></svg>

<!-- footer -->
<div class="a" style="left:231px;top:866px;width:1661px;height:19px;background:#fff;border-top:1px solid #e6e6e6"></div>
<div class="t" style="left:243px;top:875px;font-size:14px;line-height:18px;color:#777">©<span style="margin-left:8px"><span class="z" style="margin-right:1em">版权所有</span></span></div>

</body></html>
